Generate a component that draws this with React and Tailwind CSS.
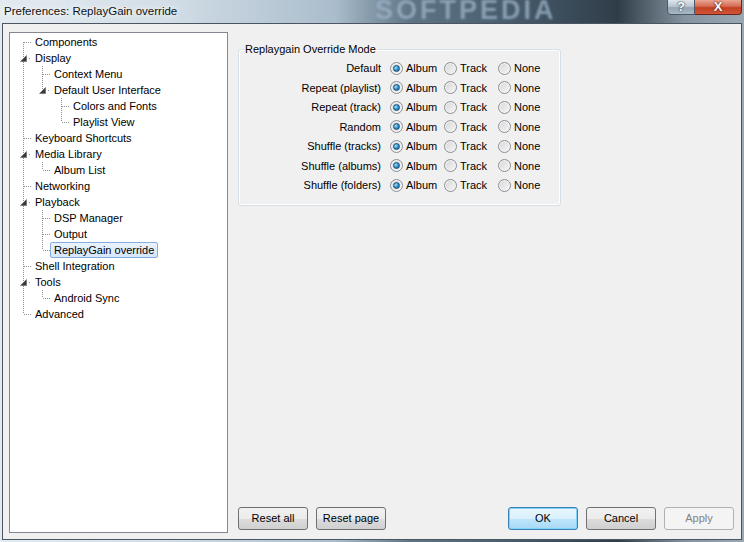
const tree = [
  { label: 'Components' },
  {
    label: 'Display',
    children: [
      { label: 'Context Menu' },
      { label: 'Default User Interface', children: [{ label: 'Colors and Fonts' }, { label: 'Playlist View' }] },
    ],
  },
  { label: 'Keyboard Shortcuts' },
  { label: 'Media Library', children: [{ label: 'Album List' }] },
  { label: 'Networking' },
  {
    label: 'Playback',
    children: [{ label: 'DSP Manager' }, { label: 'Output' }, { label: 'ReplayGain override', selected: true }],
  },
  { label: 'Shell Integration' },
  { label: 'Tools', children: [{ label: 'Android Sync' }] },
  { label: 'Advanced' },
]

const modes = [
  'Default',
  'Repeat (playlist)',
  'Repeat (track)',
  'Random',
  'Shuffle (tracks)',
  'Shuffle (albums)',
  'Shuffle (folders)',
]

// flatten the tree into rows, remembering which ancestor levels still need a line
function flatten(nodes, level = 0, guides = [], out = []) {
  nodes.forEach((n, i) => {
    const last = i === nodes.length - 1
    out.push({ ...n, level, guides, first: level === 0 && i === 0, last })
    if (n.children) flatten(n.children, level + 1, [...guides, !last], out)
  })
  return out
}

const DOT = '#8f8f8f'

function Guide({ on }) {
  return (
    <svg width="19" height="16" className="shrink-0 block">
      {on && <line x1="13.5" y1="0" x2="13.5" y2="16" stroke={DOT} strokeDasharray="1 1" />}
    </svg>
  )
}

function Joint({ first, last, expander }) {
  return (
    <svg width="21" height="16" className="shrink-0 block">
      {!first && <line x1="13.5" y1="0" x2="13.5" y2="8" stroke={DOT} strokeDasharray="1 1" />}
      {!last && <line x1="13.5" y1="8" x2="13.5" y2="16" stroke={DOT} strokeDasharray="1 1" />}
      {expander ? (
        <>
          <line x1="19" y1="8.5" x2="21" y2="8.5" stroke={DOT} strokeDasharray="1 1" />
          <polygon points="17,5 17,12 10,12" fill="#ffffff" />
          <polygon points="16.5,5.5 16.5,11.5 10.5,11.5" fill="#3a3a3a" stroke="#555" strokeWidth="0.5" />
        </>
      ) : (
        <line x1="14" y1="8.5" x2="21" y2="8.5" stroke={DOT} strokeDasharray="1 1" />
      )}
    </svg>
  )
}

function Radio({ checked }) {
  return (
    <span className="w-[13px] h-[13px] rounded-full border border-[#8b8f94] bg-[linear-gradient(135deg,#d6d6d6,#f7f7f7)] flex items-center justify-center shrink-0 shadow-[inset_0_0_0_1px_#f4f4f4]">
      {checked && (
        <span className="w-[7px] h-[7px] rounded-full bg-[radial-gradient(circle_at_35%_35%,#a8e4fb_0%,#3a9ad3_45%,#15507f_100%)] border border-[#1b4f78]" />
      )}
    </span>
  )
}

function Button({ children, primary, disabled }) {
  let cls = 'border-[#707070] bg-[linear-gradient(#f2f2f2_0%,#ebebeb_50%,#dddddd_51%,#cfcfcf_100%)] text-black'
  if (primary) cls = 'border-[#3c7fb1] bg-[linear-gradient(#eaf6fd_0%,#d9f0fc_50%,#bee6fd_51%,#a7d9f5_100%)] text-black shadow-[inset_0_0_0_1px_#7ed4f7]'
  if (disabled) cls = 'border-[#adb2b5] bg-[#f4f4f4] text-[#838383]'
  return (
    <button className={`w-[70px] h-[23px] rounded-[3px] border ${cls} text-[11px] leading-none flex items-center justify-center`}>
      {children}
    </button>
  )
}

export default function App() {
  const rows = flatten(tree)

  return (
    <div className="w-[744px] h-[542px] flex flex-col px-[2px] pb-[2px] font-['Liberation_Sans',Arial,sans-serif] text-[11px] text-black bg-[linear-gradient(90deg,#e3ebf1_0%,#d3dee7_22%,#aabdcc_45%,#5f7586_55%,#45596a_70%,#2f3d48_83%,#8593a0_92%,#9aa8b4_100%)] overflow-hidden">
      {/* title bar */}
      <div className="h-[23px] flex items-start relative shrink-0">
        <span className="pl-[2px] pt-[3px] text-[11.5px] text-[#111] [text-shadow:0_0_5px_#ffffff,0_0_8px_#ffffff]">
          Preferences: ReplayGain override
        </span>
        <span className="absolute left-[373px] top-[-3px] text-[27px] font-bold tracking-[3px] leading-none text-[#9db4c8] opacity-75 blur-[1px] select-none">
          SOFTPEDIA
        </span>
        <div className="ml-auto flex h-[16px] mt-[-1px]">
          <div className="w-[28px] h-full border border-[#4a5a68] rounded-bl-[4px] bg-[linear-gradient(#dfe6ec_0%,#b9c6d1_45%,#93a4b3_55%,#a9b8c5_100%)] flex items-center justify-center text-white font-bold text-[13px] [text-shadow:0_0_2px_#2c3a46,0_0_1px_#2c3a46]">
            ?
          </div>
          <div className="w-[47px] h-full border border-l-0 border-[#6b2416] rounded-br-[4px] bg-[linear-gradient(#e9a592_0%,#d36b52_45%,#c2401f_55%,#d2563a_100%)] flex items-center justify-center text-white font-bold text-[13px] [text-shadow:0_0_2px_#5a1a0c,0_0_1px_#5a1a0c]">
            X
          </div>
        </div>
      </div>

      {/* client area */}
      <div className="flex-1 border border-[#4a5561] bg-[#f0f0f0] flex pl-[6px] pr-[7px] pt-[8px] pb-[6px]">
        <div className="w-[219px] shrink-0 border border-[#828790] bg-white pt-[1px]">
          {rows.map((r) => (
            <div key={r.label} className="flex h-[16px] items-center">
              {r.guides.map((g, i) => (
                <Guide key={i} on={g} />
              ))}
              <Joint first={r.first} last={r.last} expander={!!r.children} />
              <span
                className={`h-[16px] px-[3px] border rounded-[2px] leading-[14px] whitespace-nowrap ${
                  r.selected
                    ? 'border-[#84acdd] bg-[linear-gradient(#eaf3fd,#d5e7fc)]'
                    : 'border-transparent'
                }`}
              >
                {r.label}
              </span>
            </div>
          ))}
        </div>

        <div className="flex-1 ml-[10px] flex flex-col">
          <fieldset className="mt-[10px] w-[323px] border border-[#d5dfe5] rounded-[3px] pt-[2.5px] pb-[10px] shadow-[inset_0_0_0_1px_#ffffff]">
            <legend className="ml-[5px] px-[1px] leading-[14px]">Replaygain Override Mode</legend>
            {modes.map((m) => (
              <div key={m} className="flex items-center h-[19.5px]">
                <span className="w-[142px] text-right whitespace-nowrap">{m}</span>
                <div className="ml-[9px] flex">
                  {['Album', 'Track', 'None'].map((o) => (
                    <label key={o} className="w-[54px] flex items-center gap-[3px]">
                      <Radio checked={o === 'Album'} />
                      <span>{o}</span>
                    </label>
                  ))}
                </div>
              </div>
            ))}
          </fieldset>

          <div className="mt-auto mb-[3px] flex">
            <div className="flex gap-[8px]">
              <Button>Reset all</Button>
              <Button>Reset page</Button>
            </div>
            <div className="ml-auto flex gap-[8px]">
              <Button primary>OK</Button>
              <Button>Cancel</Button>
              <Button disabled>Apply</Button>
            </div>
          </div>
        </div>
      </div>
    </div>
  )
}
